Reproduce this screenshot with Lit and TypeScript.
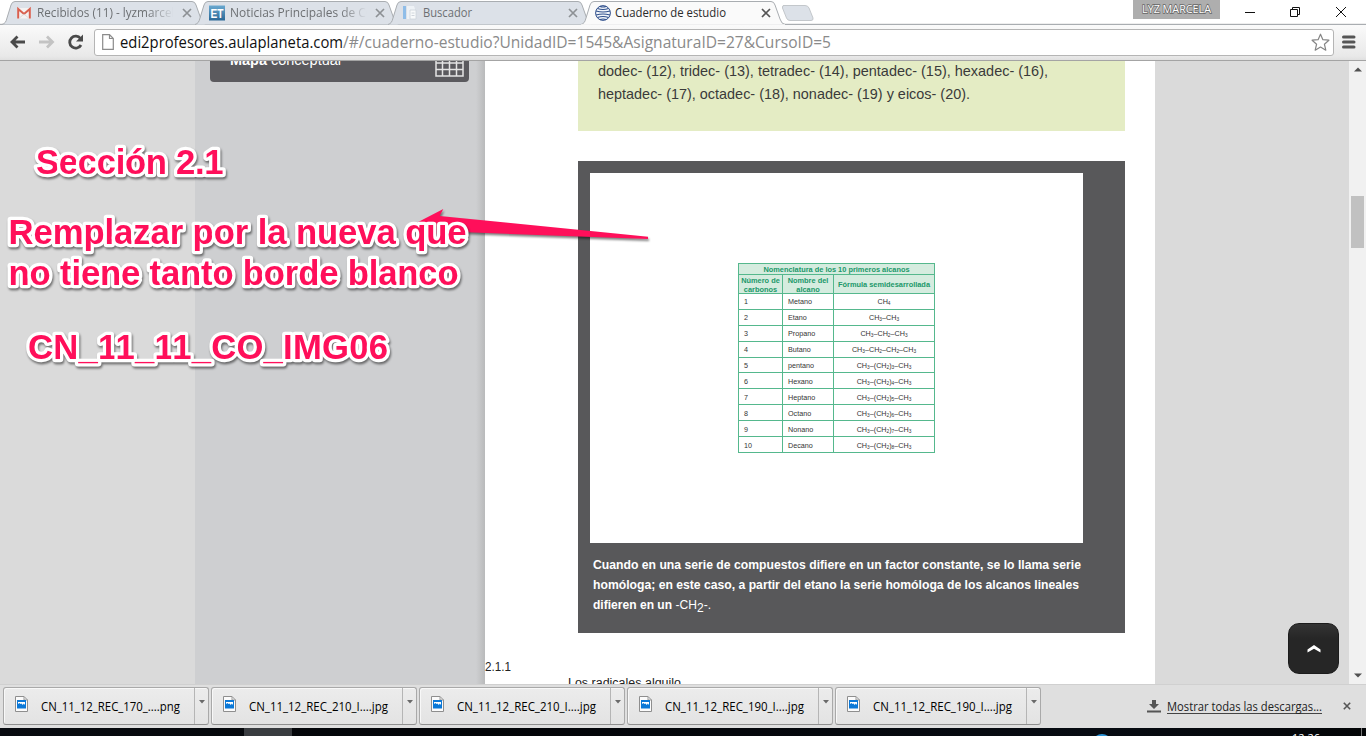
import { LitElement, html, css, svg, nothing } from "lit";
import { customElement, property } from "lit/decorators.js";

// One line of text set to an exact measure.
const line = (text: unknown, width: number, height: number, base: number, cls: string) => html`
  <svg class="line ${cls}" width=${width} height=${height}>
    <text x="0" y=${base} textLength=${width} lengthAdjust="spacingAndGlyphs">${text}</text>
  </svg>`;

const lineStyles = css`
  .line { display: block; overflow: visible; flex: none; }
  .ui { font-family: "Open Sans", "Noto Sans", sans-serif; }
  .arial { font-family: "Liberation Sans", Arial, sans-serif; }
  .s12 { font-size: 12px; }
`;

const gmail = svg`
  <rect x="1.500" y="3" width="13" height="10.500" fill="#f4f2f2"/>
  <path d="M2.200 13.500V4L8 9L13.800 4V13.500" fill="none" stroke="#d9604f" stroke-width="2"/>
  <path d="M4 12.500L8 9L12 12.500" fill="none" stroke="#d8cfcf" stroke-width="0.800"/>`;
const et = svg`
  <defs><linearGradient id="b" x1="0" x2="0" y1="0" y2="1">
    <stop offset="0" stop-color="#6aa9d0"/><stop offset="1" stop-color="#2a6896"/></linearGradient></defs>
  <rect width="16" height="15" y="0.5" fill="url(#b)"/>
  <text x="1.5" y="13" font-size="13" font-weight="700" textLength="13" lengthAdjust="spacingAndGlyphs"
    font-family="Liberation Sans, sans-serif" fill="#fff">ET</text>`;
const pages = svg`
  <path d="M1 1h3v13H1z" fill="#8fbde8"/>
  <path d="M5 1h7l1 3v10H5z" fill="#eef2f6"/>
  <path d="M8 5h6v9H8z" fill="#f8fafb" stroke="#ccd3da" stroke-width=".8"/>
  <path d="M9.500 8h3M9.500 10.500h3" stroke="#c4ccd4" stroke-width=".8"/>`;
const globe = svg`
  <circle cx="8" cy="8" r="7.400" fill="#f2f6fb" stroke="#2f4f8c" stroke-width="1"/>
  <path d="M2.500 3.500Q8 5.500 13.500 3.500M1 6Q8 8 15 6M1 10Q8 8 15 10M2.500 12.500Q8 10.500 13.500 12.500M5 1.500Q8 2.500 11 1.500M5 14.500Q8 13.500 11 14.500"
    fill="none" stroke="#2f4f8c" stroke-width="1.100"/>`;

@customElement("browser-tab")
class BrowserTab extends LitElement {
  @property({ attribute: false }) icon: unknown = nothing;
  @property() label = "";
  @property({ type: Number }) measure = 100;
  @property({ type: Boolean }) active = false;
  @property({ type: Boolean }) fade = false;

  static styles = [lineStyles, css`
    :host { display: grid; width: 204px; height: 25px; margin-right: -11px; flex: none; }
    :host([active]) { z-index: 1; }
    .shape, .row { grid-area: 1 / 1; }
    .row { display: flex; align-items: flex-start; padding: 5px 13px 0 14px; z-index: 1; }
    .icon { width: 16px; height: 16px; flex: none; }
    .text { width: 141px; margin: 0 2px 0 5px; overflow: hidden; fill: #6d7073; }
    .fade { -webkit-mask-image: linear-gradient(90deg, #000 78%, transparent 97%); }
    :host([active]) .text { fill: #2b2b2b; margin-left: 4px; margin-right: 3px; }
    .close { width: 10px; height: 10px; margin: 3px 0 0 2px; stroke: #8d9195; flex: none; }
    :host([active]) .close { stroke: #555; }
  `];

  render() {
    return html`
      <svg class="shape" width="204" height="25">
        <path d="M0 24.500C3 23.500 4 22 5 18L9 5Q10 1.500 13 1.500H190Q193 1.500 194 5L199 19Q200.500 24 204 24.500"
          fill=${this.active ? "#fafafa" : "#dce1e8"} stroke="#a9adb1" stroke-width="1"/>
        ${this.active ? svg`<path d="M0 25H204" stroke="#f8f8f8" stroke-width="1.500"/>` : nothing}
      </svg>
      <div class="row">
        <svg class="icon" viewBox="0 0 16 16">${this.icon}</svg>
        <div class="text ${this.fade ? "fade" : ""}">${line(this.label, this.measure, 17, 12, "ui s12")}</div>
        <svg class="close" viewBox="0 0 10 10"><path d="M1 1L9 9M9 1L1 9" stroke-width="1.700"/></svg>
      </div>`;
  }
}

@customElement("download-item")
class DownloadItem extends LitElement {
  @property() name = "";
  static styles = [lineStyles, css`
    :host { display: flex; box-sizing: border-box; width: 206px; height: 38px; flex: none;
      border: 1px solid #a9a9a9; border-bottom-color: #8f8f8f; border-radius: 3px;
      background: linear-gradient(#ececec, #e3e3e3); box-shadow: inset 1px 1px 0 #f8f8f8; }
    .main { display: flex; width: 191px; border-right: 1px solid #b5b5b5; padding: 8px 0 0 11px; box-sizing: border-box; }
    .file { width: 13px; height: 17px; margin-right: 13px; flex: none; }
    .arrow { margin: 12px 0 0 4px; width: 6px; height: 4px; }
  `];
  render() {
    return html`
      <div class="main">
        <svg class="file" viewBox="0 0 13 17">
          <path d="M.5.5H9L12.500 4V15.500H.5Z" fill="#fbfbfb" stroke="#8e8e8e"/>
          <path d="M9 .5V4H12.500" fill="none" stroke="#9a9a9a"/>
          <rect x="2" y="4" width="9" height="8.500" fill="#0b78d7"/>
          <path d="M3 6H10V9L8.800 7.500L7.800 9L6.500 7.500L5.500 8L4.500 7L3 8Z" fill="#fff"/>
        </svg>
        ${line(this.name, 139, 20, 14.5, "ui s12")}
      </div>
      <svg class="arrow" viewBox="0 0 6 4"><path d="M0 0H6L3 3.500Z" fill="#6a6a6a"/></svg>`;
  }
}

const rows: [string, string, string][] = [
  ["1", "Metano", "CH4"],
  ["2", "Etano", "CH3–CH3"],
  ["3", "Propano", "CH3–CH2–CH3"],
  ["4", "Butano", "CH3–CH2–CH2–CH3"],
  ["5", "pentano", "CH3–(CH2)3–CH3"],
  ["6", "Hexano", "CH3–(CH2)4–CH3"],
  ["7", "Heptano", "CH3–(CH2)5–CH3"],
  ["8", "Octano", "CH3–(CH2)6–CH3"],
  ["9", "Nonano", "CH3–(CH2)7–CH3"],
  ["10", "Decano", "CH3–(CH2)8–CH3"],
];

@customElement("alkane-table")
class AlkaneTable extends LitElement {
  static styles = css`
    :host { display: grid; width: 197px; height: 190px; box-sizing: border-box;
      grid-template-columns: 43px 50px 1fr; grid-template-rows: 10px 18px; grid-auto-rows: 1fr;
      gap: 1px; padding: 1px; background: #55b88d;
      font: 7.200px/9px "Liberation Sans", Arial, sans-serif; color: #333; }
    div { background: #fff; display: flex; align-items: center; white-space: nowrap; box-sizing: border-box; padding-top: 1px; }
    .head { background: #d5ecdf; color: #21986a; font-weight: 700; justify-content: center; text-align: center; font-size: 7.400px; }
    .cell { padding-left: 5px; }
    .title { grid-column: 1 / 4; }
    .formula { justify-content: center; }
    .sub { font-size: 4.800px; line-height: 5px; padding-top: 4px; }
  `;
  render() {
    const formula = (f: string) => f.split(/(\d)/).map(p => /\d/.test(p) ? html`<span class="sub">${p}</span>` : html`<span>${p}</span>`);
    return html`
      <div class="head title">Nomenclatura de los 10 primeros alcanos</div>
      <div class="head">Número de<br>carbonos</div>
      <div class="head">Nombre del<br>alcano</div>
      <div class="head">Fórmula semidesarrollada</div>
      ${rows.map(([n, name, f]) => html`
        <div class="cell">${n}</div><div class="cell">${name}</div><div class="formula">${formula(f)}</div>`)}`;
  }
}

@customElement("app-root")
class AppRoot extends LitElement {
  static styles = [lineStyles, css`
    :host { display: flex; flex-direction: column; position: relative; width: 1366px; height: 736px; overflow: hidden; background: #fff; }
    .strip { display: flex; height: 25px; padding-left: 2px; flex: none; box-sizing: border-box;
      background: linear-gradient(#fff 23px, #eee 23px, #eee 24px, #a9adb1 24px); }
    .new-tab { width: 34px; height: 18px; margin: 4px 0 0 7px; }
    .user { width: 87px; height: 19px; margin-left: 318px; background: #aeaeae; display: flex; justify-content: center; padding-top: 1px; box-sizing: border-box; }
    .user-name { font-size: 11px; fill: #fff; stroke: #666; stroke-width: 1.500px; paint-order: stroke; }
    .window { width: 120px; height: 24px; margin-left: 18px; }
    .toolbar { display: flex; align-items: center; height: 36px; flex: none; box-sizing: border-box; border-bottom: 1px solid #a4a4a4;
      background: linear-gradient(#fafafa, #e9e9e9 31px, #e0e0e0); padding: 0 10px 2px; }
    .nav { width: 74px; height: 18px; margin-right: 10px; }
    .address { display: flex; align-items: center; width: 1240px; height: 27px; box-sizing: border-box; margin-top: 1px;
      border: 1px solid #b5b5b5; border-radius: 3px; background: #fff; padding: 0 3px 0 7px; }
    .page-icon { width: 12px; height: 16px; margin-right: 6px; }
    .url { font-size: 15.500px; fill: #111; }
    .rest { fill: #8a8a8a; }
    .star { width: 19px; height: 19px; margin-left: auto; }
    .menu { width: 14px; height: 14px; margin-left: 8px; }

    .content { display: flex; height: 623px; flex: none; background: #dadada; overflow: hidden; }
    .sidebar { width: 290px; margin-left: 195px; flex: none; box-sizing: border-box; padding-left: 15px;
      background: linear-gradient(90deg, transparent 281px, #b9babb 290px), #cecfd1; }
    .map { display: flex; width: 259px; height: 21px; background: #5b5a5e; border-radius: 0 0 4px 4px; box-sizing: border-box; padding: 0 5px 0 20px; overflow: hidden; justify-content: space-between; }
    .map-text { font-size: 14px; fill: #fff; }
    .bold { font-weight: 700; }
    .grid { width: 29px; height: 16px; }
    .main { width: 670px; background: #fff; flex: none; }
    .note { margin-left: 93px; width: 547px; height: 70px; background: #e4ecc4; box-sizing: border-box; padding-left: 20px; fill: #3a3a3a; }
    .s15 { font-size: 14.300px; }
    .figure { margin: 30px 0 0 93px; width: 547px; height: 472px; background: #58585a; box-sizing: border-box; padding: 12px 0 0 12px; }
    .picture { display: flex; width: 493px; height: 370px; background: #fff; box-sizing: border-box; padding: 90px 0 0 148px; margin-bottom: 12px; }
    .caption { font-size: 13.300px; fill: #fff; font-weight: 700; margin-left: 3px; }
    .light { font-weight: 400; }
    .section { margin-top: 25px; fill: #222; font-size: 12.500px; }
    .heading { margin-left: 83px; fill: #222; font-size: 12.500px; }
    .side { flex: 1; display: flex; flex-direction: column; justify-content: flex-end; align-items: flex-end; padding: 0 10px 10px 0; }
    .top { width: 51px; height: 51px; border-radius: 11px; background: linear-gradient(#343434, #262626 30%); display: flex; align-items: center; justify-content: center;
      box-sizing: border-box; border: 1px solid #1c1c1c; }
    .scroll { width: 17px; background: #f1f1f1; display: flex; flex-direction: column; align-items: center; justify-content: space-between; box-sizing: border-box; padding: 6px 0; }
    .thumb { width: 13px; height: 52px; background: #c1c1c1; margin: 124px 0 auto; }
    .tri { width: 8px; height: 5px; }

    .downloads { display: flex; gap: 2px; height: 44px; flex: none; background: #dfdfdf; border-top: 1px solid #d0d0d0; box-sizing: border-box; padding: 2px 15px 0 3px; }
    .all { display: flex; margin: 10px 0 0 auto; }
    .arrow-down { width: 14px; height: 14px; margin: 2px 6px 0 0; }
    .link { fill: #222; }
    .under { border-bottom: 1px solid #444; height: 16px; }
    .dismiss { width: 8px; height: 8px; margin: 5px 0 0 21px; }
    .taskbar { display: flex; height: 8px; flex: none; background: linear-gradient(90deg, #080b10, #020407 35%, #070b12 80%, #030507); overflow: hidden; }
    .running { width: 48px; margin-left: 244px; background: #393c40; }
    .orb { width: 20px; height: 20px; border-radius: 50%; background: #2b93d6; margin: 6px 0 0 800px; }
    .clock { margin: 4px 0 0 180px; fill: #fff; font-size: 11px; }
    .edge { width: 1px; margin-left: 41px; background: #777; }

    .marks { position: absolute; left: 0; top: 0; pointer-events: none; }
    .ink { filter: drop-shadow(1px 2px 1px rgba(0,0,0,.5)); }
    .ink text { font: 700 34.670px "Liberation Sans", Arial, sans-serif; fill: #ff0f5a; stroke: #fff; stroke-width: 6.500px; stroke-linejoin: round; paint-order: stroke; }
  `];

  render() {
    return html`
      <div class="strip">
        <browser-tab .icon=${gmail} label="Recibidos (11) - lyzmarcela" .measure=${144} fade></browser-tab>
        <browser-tab .icon=${et} label="Noticias Principales de Col" .measure=${146} fade></browser-tab>
        <browser-tab .icon=${pages} label="Buscador" .measure=${49}></browser-tab>
        <browser-tab .icon=${globe} label="Cuaderno de estudio" .measure=${111} active></browser-tab>
        <svg class="new-tab" viewBox="0 0 34 18">
          <path d="M2 1.500H24Q27 1.500 28 4L32 14Q32.500 16.500 30 16.500H9Q6.500 16.500 5.500 14L1.500 4Q1 1.500 3 1.500Z" fill="#dce1e8" stroke="#c3c7cb"/>
        </svg>
        <div class="user">${line("LYZ MARCELA", 69, 15, 12, "ui user-name")}</div>
        <svg class="window" viewBox="0 0 120 24" fill="none" stroke="#111" stroke-width="1">
          <path d="M7 12.500H17"/>
          <path d="M52.500 9.500H59.500V16.500H52.500ZM54.500 9V7.500H61.500V14.500H60"/>
          <path d="M98 7L108 17M108 7L98 17"/>
        </svg>
      </div>
      <div class="toolbar">
        <svg class="nav" viewBox="0 0 74 18" fill="none" stroke-width="2.800">
          <path d="M15 9H2M7.500 3.500L2 9L7.500 14.500" stroke="#4a4a4a"/>
          <path d="M29 9H42M37 3.500L42.500 9L37 14.500" stroke="#c3c3c3"/>
          <path d="M70.500 5.500A6 6 0 1 0 71 12" stroke="#4a4a4a"/>
          <path d="M73 1.500V8.500H66Z" fill="#4a4a4a"/>
        </svg>
        <div class="address">
          <svg class="page-icon" viewBox="0 0 12 16"><path d="M.7.7H7.500L11.300 4.500V15.300H.7ZM7.500.7V4.500H11.300" fill="#fff" stroke="#8b8b8b" stroke-width="1.200"/></svg>
          ${line("edi2profesores.aulaplaneta.com", 223, 24, 18, "ui url")}
          ${line("/#/cuaderno-estudio?UnidadID=1545&AsignaturaID=27&CursoID=5", 488, 24, 18, "ui url rest")}
          <svg class="star" viewBox="0 0 19 19"><path d="M9.500 1.200L11.900 6.700L17.900 7.200L13.400 11.200L14.800 17.200L9.500 14L4.200 17.200L5.600 11.200L1.100 7.200L7.100 6.700Z" fill="#fff" stroke="#858585" stroke-width="1.200" stroke-linejoin="round"/></svg>
        </div>
        <svg class="menu" viewBox="0 0 14 14"><path d="M1.500 2H12M1.500 7H12M1.500 12H12" stroke="#555" stroke-width="3" stroke-linecap="round"/></svg>
      </div>
      <div class="content">
        <div class="sidebar">
          <div class="map">
            ${line(svg`<tspan class="bold">Mapa</tspan> conceptual`, 111, 20, 4, "arial map-text")}
            <svg class="grid" viewBox="0 0 29 16"><path d="M1 -4V15H28V-4M1 2H28M1 8.500H28M7.500 -2V15M14.500 -2V15M21.500 -2V15" fill="none" stroke="#e4e4e4" stroke-width="1.500"/></svg>
          </div>
        </div>
        <div class="main">
          <div class="note">
            ${line("dodec- (12), tridec- (13), tetradec- (14), pentadec- (15), hexadec- (16),", 450, 23, 15, "arial s15")}
            ${line("heptadec- (17), octadec- (18), nonadec- (19) y eicos- (20).", 372, 23, 15, "arial s15")}
          </div>
          <div class="figure">
            <div class="picture"><alkane-table></alkane-table></div>
            ${line("Cuando en una serie de compuestos difiere en un factor constante, se lo llama serie", 488, 20, 14, "arial caption")}
            ${line("homóloga; en este caso, a partir del etano la serie homóloga de los alcanos lineales", 486, 20, 14, "arial caption")}
            ${line(svg`difieren en un <tspan class="light">-CH</tspan><tspan class="light" dy="3">2</tspan><tspan class="light" dy="-3">-.</tspan>`, 118, 20, 14, "arial caption")}
          </div>
          ${line("2.1.1", 26, 16, 13, "arial section")}
          ${line("Los radicales alquilo", 113, 16, 13, "arial heading")}
        </div>
        <div class="side">
          <div class="top"><svg width="16" height="10" viewBox="0 0 16 10"><path d="M1.500 8.500V5.500L8 1L14.500 5.500V8.500L8 4.800Z" fill="#fff"/></svg></div>
        </div>
        <div class="scroll">
          <svg class="tri" viewBox="0 0 8 5"><path d="M0 4.500H8L4 .5Z" fill="#505050"/></svg>
          <div class="thumb"></div>
          <svg class="tri" viewBox="0 0 8 5"><path d="M0 .5H8L4 4.500Z" fill="#505050"/></svg>
        </div>
      </div>
      <div class="downloads">
        ${["CN_11_12_REC_170_....png", "CN_11_12_REC_210_I....jpg", "CN_11_12_REC_210_I....jpg", "CN_11_12_REC_190_I....jpg", "CN_11_12_REC_190_I....jpg"]
          .map(n => html`<download-item name=${n}></download-item>`)}
        <div class="all">
          <svg class="arrow-down" viewBox="0 0 14 14"><path d="M5 1H9V5H12L7 10L2 5H5ZM0 11.500H14V13.500H0Z" fill="#555"/></svg>
          <div class="under">${line("Mostrar todas las descargas...", 155, 16, 14, "ui s12 link")}</div>
          <svg class="dismiss" viewBox="0 0 8 8"><path d="M.8.8L7.200 7.200M7.200.8L.8 7.200" stroke="#555" stroke-width="1.600"/></svg>
        </div>
      </div>
      <div class="taskbar">
        <div class="running"></div><div class="orb"></div>
        ${line("12:26", 28, 14, 10, "ui clock")}
        <div class="edge"></div>
      </div>
      <svg class="marks" width="660" height="400">
        <path class="ink" d="M417.700 222.300L443.300 209L439.700 216L648 236.700V239L466.700 232.300L436 231L440 236Z" fill="#ff0f5a"/>
        <g class="ink">
          <text x="36" y="174" textLength="187.500">Sección 2.1</text>
          <text x="8.600" y="244" textLength="458">Remplazar por la nueva que</text>
          <text x="8.600" y="285" textLength="450">no tiene tanto borde blanco</text>
          <text x="28" y="359" textLength="360">CN_11_11_CO_IMG06</text>
        </g>
      </svg>`;
  }
}
